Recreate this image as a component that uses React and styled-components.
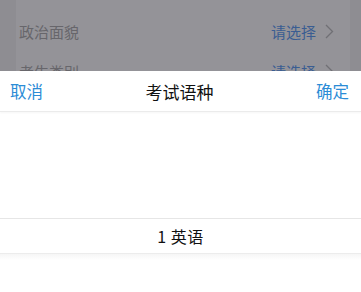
import React from "react";
import styled, { createGlobalStyle } from "styled-components";

const Global = createGlobalStyle`
  html, body { margin: 0; padding: 0; }
  body { font-family: "Noto Sans CJK SC", "Noto Sans", sans-serif; }
`;

const Screen = styled.div`
  width: 361px;
  height: 292px;
  display: flex;
  flex-direction: column;
  overflow: hidden;
  background: #8e8d92;
`;

const Backdrop = styled.div`
  height: 71px;
  flex: none;
  overflow: hidden;
  padding: 0 11px 0 16px;
`;

const Card = styled.div`
  background: #949398;
  padding-top: 11px;
`;

const FormRow = styled.div`
  height: 40px;
  display: flex;
  align-items: center;
  justify-content: space-between;
  padding: 0 16px 0 3px;
  font-size: 15px;
`;

const Label = styled.span`
  color: #67666b;
`;

const Value = styled.span`
  color: #3a5d92;
  display: flex;
  align-items: center;
  gap: 9px;
`;

const Sheet = styled.div`
  flex: 1;
  background: #fff;
  display: flex;
  flex-direction: column;
`;

const Toolbar = styled.div`
  height: 40px;
  display: flex;
  align-items: center;
  justify-content: space-between;
  padding: 0 12px 0 10px;
  border-bottom: 1px solid #ebebeb;
  box-shadow: 0 1px 2px rgba(0,0,0,0.04);
`;

const Action = styled.button`
  border: 0;
  background: none;
  padding: 0;
  font: inherit;
  font-size: 16.5px;
  color: #2b8cd6;
`;

const Title = styled.div`
  font-size: 17px;
  color: #111;
`;

const Picker = styled.div`
  flex: 1;
  display: flex;
  flex-direction: column;
  padding-top: 106px;
`;

const Selected = styled.div`
  height: 34px;
  display: flex;
  align-items: center;
  justify-content: center;
  border-top: 1px solid #e6e6e6;
  border-bottom: 1px solid #ececec;
  font-size: 16px;
  color: #111;
  letter-spacing: 0.5px;
`;

const Fade = styled.div`
  height: 6px;
  background: linear-gradient(#f6f6f6, #fff);
`;

const Chevron = () => (
  <svg width="9" height="15" viewBox="0 0 9 15" fill="none">
    <path d="M1 1l6.5 6.5L1 14" stroke="#707075" strokeWidth="1.3" />
  </svg>
);

export default function App() {
  return (
    <>
      <Global />
      <Screen>
        <Backdrop>
          <Card>
            <FormRow>
              <Label>政治面貌</Label>
              <Value>请选择<Chevron /></Value>
            </FormRow>
            <FormRow>
              <Label>考生类别</Label>
              <Value>请选择<Chevron /></Value>
            </FormRow>
          </Card>
        </Backdrop>
        <Sheet>
          <Toolbar>
            <Action>取消</Action>
            <Title>考试语种</Title>
            <Action>确定</Action>
          </Toolbar>
          <Picker>
            <Selected>1 英语</Selected>
            <Fade />
          </Picker>
        </Sheet>
      </Screen>
    </>
  );
}
